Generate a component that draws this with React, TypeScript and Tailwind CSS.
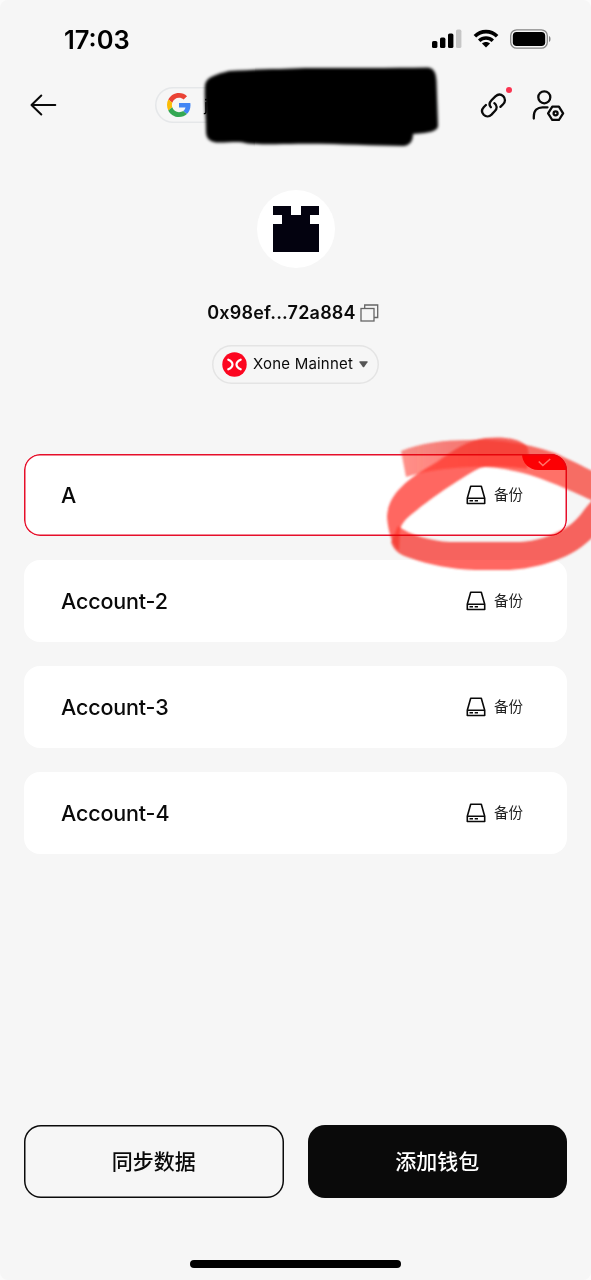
import React from "react";

const accounts = ["A", "Account-2", "Account-3", "Account-4"];

function StatusBar() {
  return (
    <div className="flex h-[78px] shrink-0 items-center justify-between pr-[39px] pl-[64px]">
      <span className="pt-[2px] text-[25.5px] leading-none font-semibold text-black">17:03</span>
      <div className="flex items-center">
        <svg width="30" height="20" viewBox="0 0 30 20">
          <rect x="0" y="12" width="5.4" height="7" rx="1.6" />
          <rect x="8" y="8.6" width="5.4" height="10.4" rx="1.6" />
          <rect x="16" y="4.4" width="5.4" height="14.6" rx="1.6" />
          <rect x="24" y="0.6" width="5.4" height="18.4" rx="1.6" fill="#c6c6c6" />
        </svg>
        <svg className="ml-[11px]" width="26" height="20" viewBox="0 0 26 20" fill="none">
          <path d="M1.9 7.2C8.2 1 17.8 1 24.1 7.2" stroke="#000" strokeWidth="3.7" />
          <path d="M6.2 11.8C10.2 8 15.8 8 19.8 11.8" stroke="#000" strokeWidth="3.5" />
          <path d="M13 18.6L9 14.5C11.2 12.5 14.8 12.5 17 14.5Z" fill="#000" />
        </svg>
        <svg className="ml-[10px]" width="43" height="20" viewBox="0 0 43 20" fill="none">
          <rect x="1.7" y="0.8" width="36.6" height="18.4" rx="6" stroke="#858585" strokeWidth="1.3" />
          <rect x="3.8" y="3" width="32.4" height="14" rx="3.8" fill="#000" />
          <path d="M40 7C42 7.6 42 12.4 40 13Z" fill="#858585" />
        </svg>
      </div>
    </div>
  );
}

function GoogleLogo() {
  return (
    <svg width="24" height="24" viewBox="0 0 48 48">
      <path fill="#ea4335" d="M24 9.5c3.54 0 6.71 1.22 9.21 3.6l6.85-6.85C35.9 2.38 30.47 0 24 0 14.62 0 6.51 5.38 2.56 13.22l7.98 6.19C12.43 13.72 17.74 9.5 24 9.5z" />
      <path fill="#4285f4" d="M46.98 24.55c0-1.57-.15-3.09-.38-4.55H24v9.02h12.94c-.58 2.96-2.26 5.48-4.78 7.18l7.73 6c4.51-4.18 7.09-10.36 7.09-17.65z" />
      <path fill="#fbbc05" d="M10.53 28.59c-.48-1.45-.76-2.99-.76-4.59s.27-3.14.76-4.59l-7.98-6.19C.92 16.46 0 20.12 0 24c0 3.88.92 7.54 2.56 10.78l7.97-6.19z" />
      <path fill="#34a853" d="M24 48c6.48 0 11.93-2.13 15.89-5.81l-7.73-6c-2.15 1.45-4.92 2.3-8.16 2.3-6.26 0-11.57-4.22-13.47-9.91l-7.98 6.19C6.51 42.62 14.62 48 24 48z" />
    </svg>
  );
}

function Header() {
  return (
    <header className="flex h-[53px] shrink-0 items-center pr-[25px] pl-[30px]">
      <svg width="27" height="22" viewBox="0 0 27 22" fill="none" stroke="#0a0a0a" strokeWidth="2" strokeLinecap="round" strokeLinejoin="round">
        <path d="M25.3 11H1.5M11.3 1.5L1.5 11L11.3 20.5" />
      </svg>
      <div className="relative ml-[98px] flex h-9 w-[281px] items-center rounded-full pl-[12px] shadow-[inset_0_0_0_1.5px_#e5e7e9]">
        <GoogleLogo />
        <span className="ml-[13px] text-base text-black">j</span>
        <svg className="absolute -top-[28px] left-[38px]" width="256" height="96" viewBox="193 58 256 96">
          <defs>
            <filter id="ink" x="-5%" y="-10%" width="110%" height="120%">
              <feGaussianBlur stdDeviation="1.7" />
            </filter>
          </defs>
          <path
            filter="url(#ink)"
            d="M205 84C206 76 217 73 229 70C260 68 285 68 305 67C350 67 390 67 428 66.500C434 67 436 72 436.500 80L438 124C438.500 130 431 132 413 133C413 140 410 144.500 403 145C370 145 330 142 290 143C270 143 252 144 245 142C240 140 225 142 216 141.500C208 140 206 136 206 130C206 115 204 98 205 84Z"
          />
        </svg>
      </div>
      <div className="relative ml-[44px] h-[30px] w-[32px]">
        <svg width="32" height="30" viewBox="0 0 32 30" fill="none" stroke="#0a0a0a" strokeWidth="2.3" strokeLinecap="round">
          <path d="M10.2 16.200C8 13.800 8.800 11.300 10.800 9.200L14.700 5.400C17.200 3.100 20.300 3.200 22.500 5.200C24.900 7.500 24.800 10.800 22.400 13.200L19.700 15.900" transform="translate(0.7 1)" />
          <path d="M14.100 11.200C17 13.400 17 16.500 14.600 19L11.200 22.600C8.900 24.900 5.600 24.900 3.400 22.700C1.200 20.400 1.300 17.500 3.400 15.200L5.600 13" transform="translate(0.300 2)" />
        </svg>
        <span className="absolute -top-[2.5px] left-[25.5px] size-[6px] rounded-full bg-[#fa3350]" />
      </div>
      <svg className="ml-[20px]" width="33" height="32" viewBox="532 88 33 32" fill="none" stroke="#0a0a0a" strokeWidth="2.3" strokeLinecap="round" strokeLinejoin="round">
        <circle cx="544.3" cy="96.300" r="6" />
        <path d="M533.800 117.500V115.500C533.800 109.500 537.500 106.300 542.500 106.300H547.500" />
        <path d="M552.300 105.600H558.900L563.100 112.300L558.900 119H552.300L548.100 112.300Z" />
        <circle cx="555.600" cy="112.300" r="2" />
      </svg>
    </header>
  );
}

function Profile() {
  return (
    <section className="flex shrink-0 flex-col items-center pt-[59px]">
      <div className="flex size-[78px] items-center justify-center rounded-full bg-white">
        <svg width="46" height="46" viewBox="0 0 10 10" shapeRendering="crispEdges" fill="#03020f">
          <path d="M0 0H4V2H6V0H10V2H8V4H10V10H0V4H2V2H0Z" />
        </svg>
      </div>
      <div className="mt-[33px] flex h-6 items-center gap-[4px] pr-[5px]">
        <span className="text-[18px] leading-6 font-semibold tracking-[0.2px] text-[#0a0a0a]">0x98ef...72a884</span>
        <svg width="19" height="18" viewBox="0 0 19 18" fill="none" stroke="#666" strokeWidth="1.3">
          <rect x="1" y="4.500" width="13" height="12.500" />
          <path d="M4.700 4.500V1H17.700V13.500H14" />
        </svg>
      </div>
      <button className="mt-[20px] flex h-[39px] w-[167px] items-center rounded-full pl-[10px] shadow-[inset_0_0_0_1.5px_#e4e4e4]">
        <svg width="25" height="25" viewBox="0 0 25 25" fill="none">
          <circle cx="12.500" cy="12.500" r="12.200" fill="#fc0620" />
          <path d="M6.300 7.700C9 8.800 10.500 10.400 10.500 12.500S9 16.200 6.300 17.300" stroke="#fff" strokeWidth="2.200" strokeLinecap="round" />
          <path d="M18.700 7.700C16 8.800 14.500 10.400 14.500 12.500S16 16.200 18.700 17.300" stroke="#fff" strokeWidth="2.200" strokeLinecap="round" />
        </svg>
        <span className="ml-[6px] text-[15px] tracking-[0.200px] whitespace-nowrap text-[#0a0a0a]">Xone Mainnet</span>
        <svg className="ml-[6px] shrink-0" width="9" height="7" viewBox="0 0 9 7">
          <path d="M0.800 0.300H8.200Q9 0.500 8.500 1.300L5.200 6Q4.500 6.700 3.800 6L0.500 1.300Q0 0.500 0.800 0.300Z" fill="#555" />
        </svg>
      </button>
    </section>
  );
}

function DriveIcon() {
  return (
    <svg width="20" height="20" viewBox="0 0 20 20" fill="none" stroke="#0a0a0a" strokeWidth="1.600" strokeLinejoin="round">
      <path d="M1.300 13.200L4.700 1.200H15.300L18.700 13.200V18.500H1.300Z" />
      <path d="M1.300 13.200H18.700" />
      <path d="M3.500 15.800H7M8.700 15.800H12" />
    </svg>
  );
}

function AccountCard({ name, selected }: { name: string; selected: boolean }) {
  return (
    <li className="relative flex h-[82px] items-center justify-between overflow-hidden rounded-2xl bg-white pr-[44px] pl-[37px]">
      <span className="text-[21.500px] font-medium tracking-[-0.15px] text-[#0a0a0a]">{name}</span>
      <span className="flex items-center gap-[8px] text-[14.500px] text-[#222]">
        <DriveIcon />
        备份
      </span>
      {selected && (
        <>
          <span className="absolute top-0 right-0 flex h-[16px] w-[45px] items-center justify-center rounded-bl-2xl bg-[#fc0008]">
            <svg width="13" height="9" viewBox="0 0 12 8" fill="none" stroke="#fff" strokeWidth="1.400">
              <path d="M0.700 3L4.500 6.800L11.300 0.800" />
            </svg>
          </span>
          <span className="absolute inset-0 rounded-2xl shadow-[inset_0_0_0_1.5px_#e60f2a]" />
        </>
      )}
    </li>
  );
}

function MarkerCircle() {
  return (
    <svg className="pointer-events-none absolute top-[430px] left-[380px] mix-blend-multiply" width="211" height="150" viewBox="380 430 211 150">
      <defs>
        <linearGradient id="fade" x1="400" x2="500" y1="0" y2="0" gradientUnits="userSpaceOnUse">
          <stop offset="0" stopColor="#ff3b30" stopOpacity="0.560" />
          <stop offset="1" stopColor="#ff3b30" stopOpacity="0.720" />
        </linearGradient>
        <filter id="soft" x="-5%" y="-5%" width="115%" height="110%">
          <feGaussianBlur stdDeviation="1" />
        </filter>
      </defs>
      <g filter="url(#soft)">
        <path
          fill="url(#fade)"
          d="M401 451C420 443 445 440 470 440C500 439 530 444 555 453C572 461 585 467 600 475V504C580 495 560 485 530 475C510 469 490 466 470 467C445 468 425 471 406 477Z"
        />
        <path
          fill="#ff3b30"
          fillOpacity="0.770"
          d="M600 495C585 503 583 517 567 527C550 537 535 541 520 542H450C430 541 410 535 398 526L391 542C394 551 400 555 410 558C430 565 450 569 475 570H505C530 570 560 561 577 550C586 544 593 537 600 530Z"
        />
        <path
          fill="#ff3b30"
          fillOpacity="0.770"
          d="M399 550C392 546 388 530 387 517C388 495 405 480 437 462C455 449 467 441 485 438C505 436 518 439 526 445Q531 452 527 469C515 467 490 465 480 468C465 475 430 499 417 510C406 518 401 524 400 530Z"
        />
      </g>
    </svg>
  );
}

export default function App() {
  return (
    <div className="bg-[#fbfbfb]">
      <main className="relative flex h-[1280px] w-[591px] flex-col overflow-hidden rounded-[8px] bg-[#f6f6f6] font-['Inter','Noto_Sans_CJK_SC',sans-serif]">
        <StatusBar />
        <Header />
        <Profile />
        <ul className="mt-[70px] flex flex-col gap-[24px] px-[24px]">
          {accounts.map((name, i) => (
            <AccountCard key={name} name={name} selected={i === 0} />
          ))}
        </ul>
        <footer className="mt-auto flex flex-col items-center pb-[12px]">
          <div className="grid w-full grid-cols-2 gap-[24px] px-[24px] text-[21px] font-medium">
            <button className="h-[73px] rounded-[17px] pt-px text-[#0a0a0a] shadow-[inset_0_0_0_1.5px_#0a0a0a]">同步数据</button>
            <button className="h-[73px] rounded-[17px] bg-[#0a0a0a] pt-px text-white">添加钱包</button>
          </div>
          <div className="mt-[62px] h-[8px] w-[211px] rounded-full bg-black" />
        </footer>
        <MarkerCircle />
      </main>
    </div>
  );
}
